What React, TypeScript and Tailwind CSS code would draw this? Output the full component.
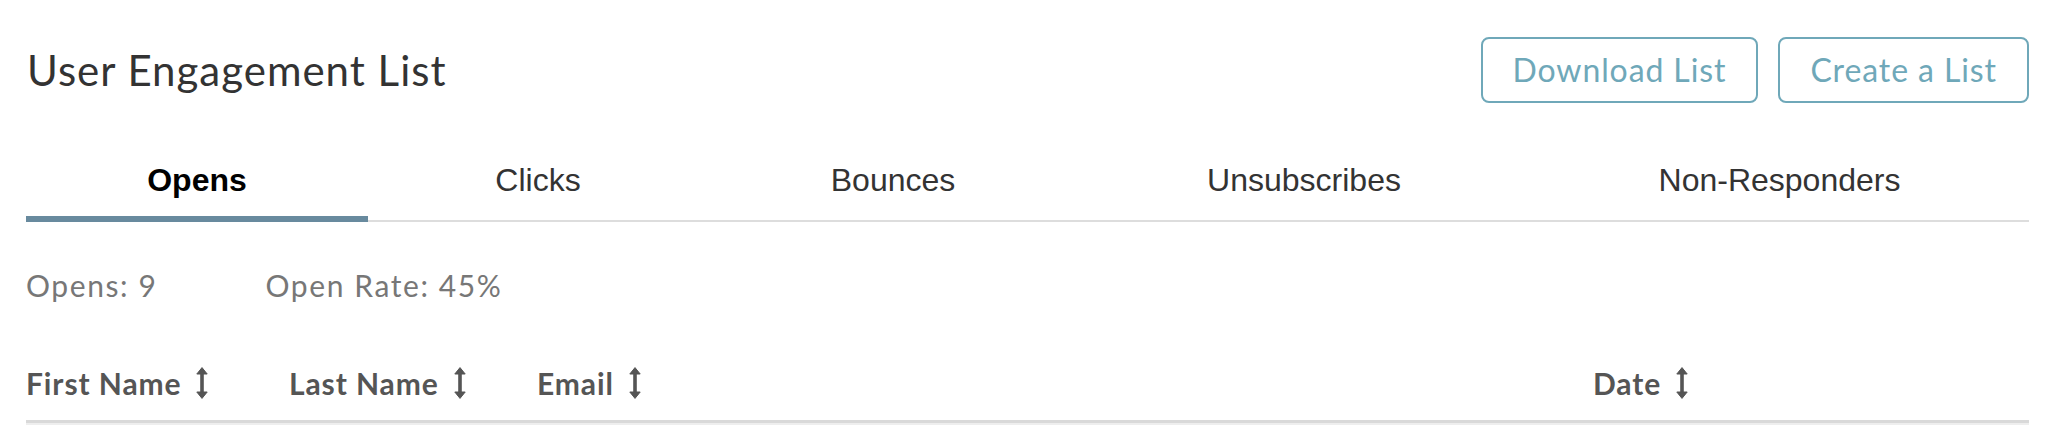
import { useState } from "react"

const tabs = ["Opens", "Clicks", "Bounces", "Unsubscribes", "Non-Responders"]
const columns = ["First Name", "Last Name", "Email", "Date"]

function SortIcon() {
  return (
    <svg width="12" height="32" viewBox="0 0 12 32" className="shrink-0" aria-hidden="true">
      <path d="M6 0.6 L11.2 7 L0.8 7 Z" fill="#555555" strokeLinejoin="round" stroke="#555555" strokeWidth="1" />
      <rect x="4.2" y="5" width="3.6" height="22" fill="#555555" />
      <path d="M6 31.4 L11.2 25 L0.8 25 Z" fill="#555555" strokeLinejoin="round" stroke="#555555" strokeWidth="1" />
    </svg>
  )
}

export default function App() {
  const [activeTab, setActiveTab] = useState("Opens")

  return (
    <div className="w-[2048px] h-[440px] bg-white pl-[26px] pr-[19px] font-['Lato',sans-serif] overflow-hidden">
      {/* Header */}
      <div className="flex items-center justify-between pt-[37px]">
        <h1 className="text-[42px] leading-[48px] tracking-[1px] text-[#333333] pl-[1px]">User Engagement List</h1>
        <div className="flex gap-[20px]">
          <button className="h-[66px] px-[30px] rounded-[8px] border-2 border-[#6fa8b9] text-[32px] tracking-[0.9px] text-[#6fa8b9] bg-white">
            Download List
          </button>
          <button className="h-[66px] px-[30px] rounded-[8px] border-2 border-[#6fa8b9] text-[32px] tracking-[0.9px] text-[#6fa8b9] bg-white">
            Create a List
          </button>
        </div>
      </div>

      {/* Tabs */}
      <div className="grid grid-cols-[342px_340px_370px_452px_1fr] mt-[37px] font-['Liberation_Sans',Arial,sans-serif]">
        {tabs.map((tab) => {
          const isActive = tab === activeTab
          return (
            <button
              key={tab}
              onClick={() => setActiveTab(tab)}
              className={
                isActive
                  ? "pt-[24px] pb-[20px] leading-[32px] text-[32px] font-bold text-black border-b-[6px] border-[#688a9e]"
                  : "pt-[24px] pb-[24px] leading-[32px] text-[32px] text-[#333333] border-b-2 border-[#dddddd]"
              }
            >
              {tab}
            </button>
          )
        })}
      </div>

      {/* Stats */}
      <div className="flex gap-[108px] mt-[45px] text-[30px] leading-[36px] tracking-[1.6px] text-[#777777]">
        <span>Opens: 9</span>
        <span>Open Rate: 45%</span>
      </div>

      {/* Table header */}
      <div className="grid grid-cols-[263px_248px_1056px_1fr] mt-[62px] pb-[19px] border-b-[3px] border-[#d9d9d9] shadow-[0_2px_0_#eeeeee]">
        {columns.map((col) => (
          <div key={col} className="flex items-center gap-[15px] text-[30px] leading-[36px] tracking-[0.9px] font-bold text-[#555555]">
            <span>{col}</span>
            <SortIcon />
          </div>
        ))}
      </div>
    </div>
  )
}
